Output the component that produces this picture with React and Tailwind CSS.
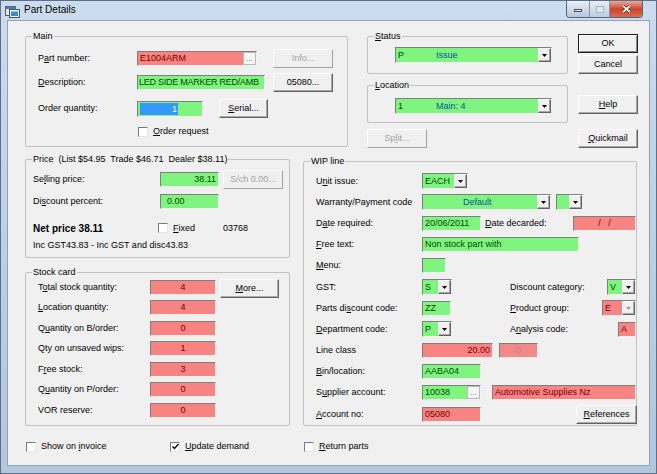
import React from 'react'

const GREEN = 'bg-[#7ff57f] text-[#004a00]'
const RED = 'bg-[#f78383] text-[#7c0000]'
const SUNKEN = 'border border-t-[#7f7f7f] border-l-[#7f7f7f] border-b-[#f2f2f2] border-r-[#f2f2f2]'
const RAISED = 'border border-t-[#fcfcfc] border-l-[#fcfcfc] border-b-[#626262] border-r-[#626262] shadow-[inset_-1px_-1px_0_#a8a8a8]'

function U({ children }) {
  return <span className="underline underline-offset-[1px]">{children}</span>
}

function Edit({ w, tone = GREEN, right, center, pad = 'px-[2px]', dots, className = '', children }) {
  return (
    <div className={`${w} h-[15px] flex shrink-0 ${SUNKEN} ${tone}`}>
      <div
        className={`flex-1 min-w-0 ${pad} leading-[13px] whitespace-pre overflow-hidden ${
          right ? 'text-right' : center ? 'text-center' : ''
        } ${className}`}
      >
        {children}
      </div>
      {dots && (
        <div className="w-[13px] h-full bg-[#f7f7f7] border border-[#b9b9b9] flex items-end justify-center text-[#666] leading-[10px] text-[8px]">
          ...
        </div>
      )}
    </div>
  )
}

function Arrow({ gray }) {
  return (
    <div className={`w-[13px] h-full shrink-0 bg-[#f0f0f0] flex items-center justify-center ${RAISED}`}>
      <svg width="5" height="3" viewBox="0 0 5 3">
        <path d="M0 0h5L2.5 3z" fill={gray ? '#9b9b9b' : '#000'} />
      </svg>
    </div>
  )
}

function Combo({ w, tone = GREEN, code, desc, gray, wide }) {
  return (
    <div className={`${w} h-[16px] flex shrink-0 bg-[#f0f0f0] ${SUNKEN}`}>
      <div className={`flex-1 flex items-center px-[2px] whitespace-nowrap overflow-hidden ${tone}`}>
        {wide ? <span className="w-[38px] shrink-0">{code}</span> : <span>{code}</span>}
        {desc && <span className="text-[#0b4fa3]">{desc}</span>}
      </div>
      <Arrow gray={gray} />
    </div>
  )
}

function Btn({ w, disabled, def, className = '', children }) {
  const edge = def
    ? 'border border-[#1e1e1e] shadow-[inset_1px_1px_0_#fff,inset_-1px_-1px_0_#8a8a8a]'
    : disabled
    ? 'border border-t-[#fcfcfc] border-l-[#fcfcfc] border-b-[#a0a0a0] border-r-[#a0a0a0]'
    : RAISED
  return (
    <div
      className={`${w} h-[19px] shrink-0 flex items-center justify-center bg-[#f0f0f0] ${edge} ${
        disabled ? 'text-[#a3a3a3]' : 'text-black'
      } ${className}`}
    >
      {children}
    </div>
  )
}

function Check({ checked, children }) {
  return (
    <div className="flex items-center">
      <div className="w-[10px] h-[10px] shrink-0 bg-white border border-t-[#7a7a7a] border-l-[#7a7a7a] border-b-[#e6e6e6] border-r-[#e6e6e6] flex items-center justify-center">
        {checked && (
          <svg width="7" height="7" viewBox="0 0 7 7">
            <path d="M0.5 3.5L2.5 5.5L6.5 1" stroke="#000" strokeWidth="1.4" fill="none" />
          </svg>
        )}
      </div>
      <span className="ml-[5px]">{children}</span>
    </div>
  )
}

function Group({ label, className = '', children }) {
  return (
    <div className={`relative shrink-0 border border-[#c2c2c2] rounded-[2px] ${className}`}>
      <span className="absolute left-[6px] top-[-7px] bg-[#f0f0f0] px-[1px] leading-[12px] whitespace-pre">{label}</span>
      {children}
    </div>
  )
}

function Row({ h = 'h-[21.2px]', className = '', children }) {
  return <div className={`flex items-center ${h} ${className}`}>{children}</div>
}

function TitleBar() {
  return (
    <div className="h-[20px] flex items-start shrink-0">
      <svg className="ml-[4px] mt-[4px]" width="15" height="13" viewBox="0 0 15 13">
        <rect x="0.5" y="1.5" width="10" height="9" fill="#dfe8f2" stroke="#4a5e74" />
        <rect x="0.5" y="1.5" width="10" height="2.5" fill="#5f7893" />
        <rect x="4.5" y="4.5" width="10" height="8" fill="#eef3f8" stroke="#3b5573" />
        <rect x="6" y="6.5" width="7" height="4.5" fill="#3f88c8" />
      </svg>
      <span className="ml-[4px] mt-[3px] text-[10px] leading-[12px] text-black">Part Details</span>
      <div className="ml-auto mr-[13px] flex h-[17px] border border-t-0 border-[#53677d] rounded-b-[4px] overflow-hidden">
        <div className="w-[23px] h-full bg-gradient-to-b from-[#e8f0f8] to-[#b4c6dc] flex items-center justify-center border-r border-[#8596ab]">
          <div className="w-[8px] h-[3px] bg-white border border-[#3c4b5c] mt-[3px]" />
        </div>
        <div className="w-[20px] h-full bg-gradient-to-b from-[#e8f0f8] to-[#bccbdd] flex items-center justify-center border-r border-[#8596ab]">
          <div className="w-[8px] h-[7px] border border-[#a9b6c6] bg-[#dfe6ee]" />
        </div>
        <div className="w-[32px] h-full bg-gradient-to-b from-[#eaa898] via-[#c9462f] to-[#d76a52] flex items-center justify-center">
          <svg width="9" height="8" viewBox="0 0 9 8">
            <path d="M1 1L8 7M8 1L1 7" stroke="#5a1a10" strokeWidth="3" />
            <path d="M1 1L8 7M8 1L1 7" stroke="#fff" strokeWidth="1.7" />
          </svg>
        </div>
      </div>
    </div>
  )
}

function MainGroup() {
  return (
    <Group label="Main" className="w-[323px] h-[111px] mt-[2px]">
      <div className="pt-[12px] pl-[12px] flex flex-col">
        <Row h="h-[19px]">
          <div className="w-[99px]">
            P<U>a</U>rt number:
          </div>
          <Edit w="w-[120px]" tone={RED} dots>
            E1004ARM
          </Edit>
          <Btn w="w-[60px]" className="ml-[16px]" disabled>
            Info...
          </Btn>
        </Row>
        <Row h="h-[19px]" className="mt-[5px]">
          <div className="w-[99px]">
            <U>D</U>escription:
          </div>
          <Edit w="w-[128px]" pad="pl-[1px]" className="tracking-[-0.25px]">
            LED SIDE MARKER RED/AMB
          </Edit>
          <Btn w="w-[60px]" className="ml-[8px]">
            05080...
          </Btn>
        </Row>
        <Row h="h-[19px]" className="mt-[7px]">
          <div className="w-[99px]">Order quantity:</div>
          <div className={`w-[66px] h-[16px] flex ${SUNKEN} ${GREEN}`}>
            <div className="ml-[2px] my-[1px] w-[38px] bg-[#3399ff] text-white text-right pr-[1px] leading-[12px]">1</div>
          </div>
          <Btn w="w-[49px]" className="ml-[16px]">
            <span>
              <U>S</U>erial...
            </span>
          </Btn>
        </Row>
        <Row h="h-[13px]" className="mt-[7px]">
          <div className="w-[100px]" />
          <Check>
            <U>O</U>rder request
          </Check>
        </Row>
      </div>
    </Group>
  )
}

function PriceGroup() {
  return (
    <Group label="Price  (List $54.95  Trade $46.71  Dealer $38.11)" className="w-[265px] h-[99px]">
      <div className="pt-[10px] pl-[7px] flex flex-col">
        <Row h="h-[19px]">
          <div className="w-[127px]">
            Se<U>l</U>ling price:
          </div>
          <Edit w="w-[59px]" right>
            38.11
          </Edit>
          <Btn w="w-[60px]" className="ml-[4px]" disabled>
            S/ch 0.00...
          </Btn>
        </Row>
        <Row h="h-[18px]" className="mt-[3px]">
          <div className="w-[127px]">
            Di<U>s</U>count percent:
          </div>
          <Edit w="w-[59px]" pad="pl-[6px]">
            0.00
          </Edit>
        </Row>
        <Row h="h-[14px]" className="mt-[11px]">
          <div className="w-[125px] font-bold text-[10px]">Net price 38.11</div>
          <div className="w-[65px]">
            <Check>
              <U>F</U>ixed
            </Check>
          </div>
          <span>03768</span>
        </Row>
        <Row h="h-[14px]" className="mt-[3px]">
          <span>Inc GST43.83 - Inc GST and disc43.83</span>
        </Row>
      </div>
    </Group>
  )
}

const STOCK = [
  [<>T<U>o</U>tal stock quantity:</>, '4'],
  [<><U>L</U>ocation quantity:</>, '4'],
  [<>Q<U>u</U>antity on B/order:</>, '0'],
  [<>Qty on unsaved wips:</>, '1'],
  [<>F<U>r</U>ee stock:</>, '3'],
  [<>Q<U>u</U>antity on P/order:</>, '0'],
  [<>VOR reserve:</>, '0'],
]

function StockGroup() {
  return (
    <Group label="Stock card" className="w-[265px] h-[154px] mt-[14px]">
      <div className="pt-[4px] pl-[12px] flex flex-col">
        {STOCK.map(([label, v], i) => (
          <Row key={i} h="h-[20.5px]">
            <div className="w-[112px]">{label}</div>
            <Edit w="w-[66px]" tone={RED} center>
              {v}
            </Edit>
            {i === 0 && (
              <Btn w="w-[59px]" className="ml-[4px] mt-[2px]">
                <span>
                  <U>M</U>ore...
                </span>
              </Btn>
            )}
          </Row>
        ))}
      </div>
    </Group>
  )
}

function WipGroup() {
  return (
    <Group label="WIP line" className="w-[334px] h-[265px] ml-[13px] mt-[2px]">
      <div className="pt-[8.5px] pl-[12px] flex flex-col">
        <Row>
          <div className="w-[106px]">
            U<U>n</U>it issue:
          </div>
          <Combo w="w-[46px]" code="EACH" />
        </Row>
        <Row>
          <div className="w-[106px]">Warranty/Payment code</div>
          <Combo w="w-[129px]" code="" desc="Default" wide />
          <div className="ml-[5px]">
            <Combo w="w-[27px]" code="" />
          </div>
        </Row>
        <Row>
          <div className="w-[106px]">
            D<U>a</U>te required:
          </div>
          <Edit w="w-[59px]">20/06/2011</Edit>
          <span className="ml-[4px]">
            <U>D</U>ate decarded:
          </span>
          <div className="ml-auto">
            <Edit w="w-[63px]" tone={RED} center>
              {'/   /'}
            </Edit>
          </div>
        </Row>
        <Row>
          <div className="w-[106px]">
            <U>F</U>ree text:
          </div>
          <Edit w="w-[157px]">Non stock part with</Edit>
        </Row>
        <Row>
          <div className="w-[106px]">
            <U>M</U>enu:
          </div>
          <Edit w="w-[24px]" />
        </Row>
        <Row>
          <div className="w-[106px]">GST:</div>
          <Combo w="w-[30px]" code="S" />
          <span className="ml-[58px]">Discount category:</span>
          <div className="ml-auto">
            <Combo w="w-[29px]" code="V" />
          </div>
        </Row>
        <Row>
          <div className="w-[106px]">
            Parts di<U>s</U>count code:
          </div>
          <Edit w="w-[29px]">ZZ</Edit>
          <span className="ml-[59px]">
            <U>P</U>roduct group:
          </span>
          <div className="ml-auto">
            <Combo w="w-[34px]" tone={RED} code="E" gray />
          </div>
        </Row>
        <Row>
          <div className="w-[106px]">
            <U>D</U>epartment code:
          </div>
          <Combo w="w-[30px]" code="P" />
          <span className="ml-[58px]">
            A<U>n</U>alysis code:
          </span>
          <div className="ml-auto">
            <Edit w="w-[18px]" tone={RED}>
              A
            </Edit>
          </div>
        </Row>
        <Row>
          <div className="w-[106px]">Line class</div>
          <Edit w="w-[71px]" tone={RED} right>
            20.00
          </Edit>
          <div className="ml-[6px]">
            <Edit w="w-[39px]" tone="bg-[#f38888] text-[#b58c8c]" center>
              0
            </Edit>
          </div>
        </Row>
        <Row>
          <div className="w-[106px]">
            <U>B</U>in/location:
          </div>
          <Edit w="w-[59px]">AABA04</Edit>
        </Row>
        <Row>
          <div className="w-[106px]">
            S<U>u</U>pplier account:
          </div>
          <Edit w="w-[59px]" dots>
            10038
          </Edit>
          <div className="ml-[11px] flex-1">
            <Edit w="w-full" tone={RED}>
              Automotive Supplies Nz
            </Edit>
          </div>
        </Row>
        <Row>
          <div className="w-[106px]">
            <U>A</U>ccount no:
          </div>
          <Edit w="w-[59px]" tone={RED}>
            05080
          </Edit>
          <Btn w="w-[61px]" className="ml-auto mr-[-1px]">
            <span>
              <U>R</U>eferences
            </span>
          </Btn>
        </Row>
      </div>
    </Group>
  )
}

export default function App() {
  return (
    <div className="w-[657px] h-[474px] flex flex-col bg-gradient-to-b from-[#cddcee] via-[#bcd0e6] to-[#b3c6dd] border border-[#5b6f86] overflow-hidden font-['Liberation_Sans',Arial,sans-serif] text-[9px] leading-[11px] text-black select-none">
      <TitleBar />
      <div className="flex-1 mx-[7px] mb-[8px] bg-[#f0f0f0] shadow-[0_0_0_1px_#8ea2b8] pl-[17px] pt-[13px] flex flex-col">
        <div className="flex items-start">
          <MainGroup />
          <div className="ml-[19px] mt-[2px] w-[201px] flex flex-col">
            <Group label={<><U>S</U>tatus</>} className="h-[38px]">
              <div className="pt-[10px] pl-[27px]">
                <Combo w="w-[157px]" code="P" desc="Issue" wide />
              </div>
            </Group>
            <Group label={<><U>L</U>ocation</>} className="h-[38px] mt-[11px]">
              <div className="pt-[12px] pl-[27px]">
                <Combo w="w-[157px]" code="1" desc="Main: 4" wide />
              </div>
            </Group>
            <Btn w="w-[60px]" className="mt-[6px]" disabled>
              Sp<U>l</U>it...
            </Btn>
          </div>
          <div className="ml-[10px] w-[60px] flex flex-col">
            <Btn w="w-[60px]" def>
              OK
            </Btn>
            <Btn w="w-[60px]" className="mt-[2px]">
              Cancel
            </Btn>
            <Btn w="w-[60px]" className="mt-[21px]">
              <span>
                <U>H</U>elp
              </span>
            </Btn>
            <Btn w="w-[60px]" className="mt-[15px]">
              <span>
                <U>Q</U>uickmail
              </span>
            </Btn>
          </div>
        </div>

        <div className="flex items-start mt-[11px]">
          <div className="w-[265px] flex flex-col">
            <PriceGroup />
            <StockGroup />
          </div>
          <WipGroup />
        </div>

        <div className="flex items-center mt-[15px] pl-[1px]">
          <div className="w-[144px]">
            <Check>
              Show on <U>i</U>nvoice
            </Check>
          </div>
          <div className="w-[134px]">
            <Check checked>
              <U>U</U>pdate demand
            </Check>
          </div>
          <Check>
            <U>R</U>eturn parts
          </Check>
        </div>
      </div>
    </div>
  )
}
